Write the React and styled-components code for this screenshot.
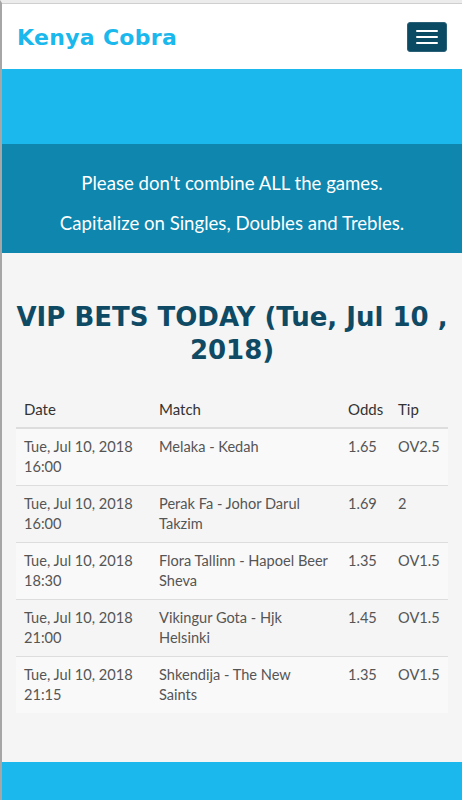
import React from 'react';
import styled, { createGlobalStyle } from 'styled-components';

const GlobalStyle = createGlobalStyle`
    html, body{
        margin:0;
        padding:0;
        background:#f5f5f5;
    }
    body{
        font-family:Lato, "Open Sans", sans-serif;
        color:#333;
    }
`;

const bets = [
    { date: 'Tue, Jul 10, 2018', time: '16:00', match: 'Melaka - Kedah', odds: '1.65', tip: 'OV2.5' },
    { date: 'Tue, Jul 10, 2018', time: '16:00', match: 'Perak Fa - Johor Darul Takzim', odds: '1.69', tip: '2' },
    { date: 'Tue, Jul 10, 2018', time: '18:30', match: 'Flora Tallinn - Hapoel Beer Sheva', odds: '1.35', tip: 'OV1.5' },
    { date: 'Tue, Jul 10, 2018', time: '21:00', match: 'Vikingur Gota - Hjk Helsinki', odds: '1.45', tip: 'OV1.5' },
    { date: 'Tue, Jul 10, 2018', time: '21:15', match: 'Shkendija - The New Saints', odds: '1.35', tip: 'OV1.5' },
];

function App() {
    return (
        <Frame>
            <GlobalStyle />
            <Navbar>
                <Brand>Kenya Cobra</Brand>
                <Toggle type="button" aria-label="menu">
                    <span />
                    <span />
                    <span />
                </Toggle>
            </Navbar>
            <Band />
            <Notice>
                <p>Please don't combine ALL the games.</p>
                <p>Capitalize on Singles, Doubles and Trebles.</p>
            </Notice>
            <Section>
                <Title>VIP BETS TODAY (Tue, Jul 10 , 2018)</Title>
                <Table>
                    <thead>
                        <tr>
                            <Th $w={135}>Date</Th>
                            <Th $w={189}>Match</Th>
                            <Th $w={50}>Odds</Th>
                            <Th>Tip</Th>
                        </tr>
                    </thead>
                    <tbody>
                        {bets.map((b, i) => (
                            <Row key={i} $striped={i % 2 === 0}>
                                <Td>{b.date}<br />{b.time}</Td>
                                <Td>{b.match}</Td>
                                <Td>{b.odds}</Td>
                                <Td>{b.tip}</Td>
                            </Row>
                        ))}
                    </tbody>
                </Table>
            </Section>
            <Footer />
        </Frame>
    );
}

export default App;

const Frame = styled.div`
    border-left:2px solid #a6a6a6;
    border-top:3px solid #ececec;
    min-height:797px;
    background:#f5f5f5;
    display:flex;
    flex-direction:column;
`;

const Navbar = styled.header`
    height:66px;
    box-sizing:border-box;
    border-top:1px solid #cfcfcf;
    background:#fff;
    display:flex;
    align-items:center;
    justify-content:space-between;
    padding:0 15px 0 15px;
`;

const Brand = styled.div`
    font-family:"DejaVu Sans", sans-serif;
    font-weight:700;
    font-size:22px;
    letter-spacing:0.3px;
    color:#1ab8ec;
    margin-top:1px;
`;

const Toggle = styled.button`
    width:40px;
    height:30px;
    box-sizing:border-box;
    background:#0b4a63;
    border:1px solid #2a6178;
    border-radius:3px;
    display:flex;
    flex-direction:column;
    align-items:center;
    justify-content:center;
    gap:4px;
    padding:0;
    margin-top:1px;
    span{
        display:block;
        width:22px;
        height:2px;
        border-radius:1px;
        background:#fff;
    }
`;

const Band = styled.div`
    height:75px;
    background:#1ab8ec;
`;

const Notice = styled.div`
    background:#0e86ae;
    color:#fff;
    text-align:center;
    font-size:18.6px;
    line-height:24px;
    padding:27px 10px 18px;
    p{
        margin:0 0 16px;
    }
    p:last-child{
        margin-bottom:0;
    }
`;

const Section = styled.main`
    padding:48px 14px 40px 14px;
    flex:1;
`;

const Title = styled.h2`
    font-family:"DejaVu Sans", sans-serif;
    font-weight:700;
    font-size:26px;
    line-height:33px;
    color:#0f4a64;
    text-align:center;
    margin:0 0 32px;
`;

const Table = styled.table`
    width:100%;
    table-layout:fixed;
    border-collapse:collapse;
    font-size:14.6px;
    line-height:20px;
`;

const Th = styled.th`
    box-sizing:border-box;
    text-align:left;
    font-weight:400;
    font-size:15px;
    color:#333;
    padding:0 8px 8px;
    border-bottom:2px solid #ddd;
    width:${p => p.$w ? `${p.$w}px` : 'auto'};
    vertical-align:bottom;
`;

const Row = styled.tr`
    background:${p => p.$striped ? '#f9f9f9' : 'transparent'};
    border-top:1px solid #ddd;
    &:first-child{
        border-top:0;
    }
`;

const Td = styled.td`
    box-sizing:border-box;
    padding:8px;
    color:#555;
    vertical-align:top;
`;

const Footer = styled.footer`
    height:38px;
    background:#1ab8ec;
`;
